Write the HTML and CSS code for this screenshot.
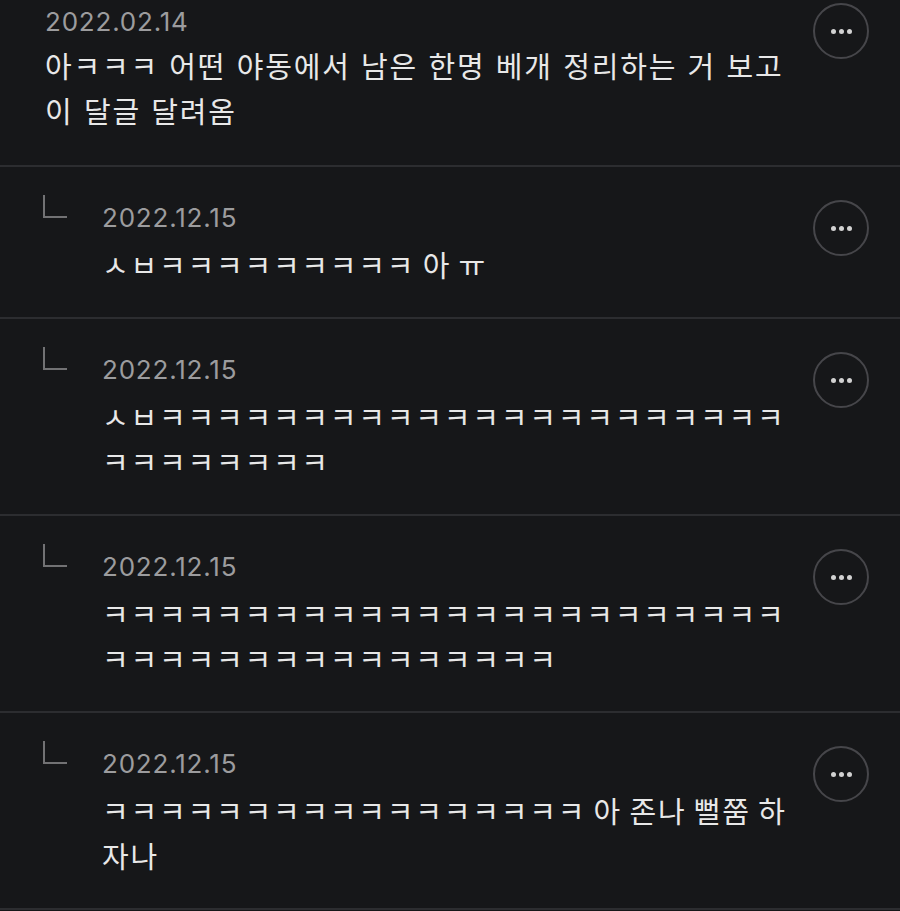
FILE: index.html
```html
<!DOCTYPE html>
<html lang="ko">

<head>
    <meta charset="UTF-8">
    <meta name="viewport" content="width=device-width, initial-scale=1.0">
    <title>댓글</title>
    <link rel="stylesheet" href="styles.css">
</head>

<body>
    <div class="comments">
        <div class="comment comment-top">
            <div class="comment-body">
                <div class="comment-date">2022.02.14</div>
                <p class="comment-text">아ㅋㅋㅋ 어떤 야동에서 남은 한명 베개 정리하는 거 보고 이 달글 달려옴</p>
            </div>
            <button class="more" aria-label="더보기"><span></span><span></span><span></span></button>
        </div>

        <div class="comment reply">
            <span class="reply-mark"></span>
            <div class="comment-body">
                <div class="comment-date">2022.12.15</div>
                <p class="comment-text">ㅅㅂㅋㅋㅋㅋㅋㅋㅋㅋㅋ 아 ㅠ</p>
            </div>
            <button class="more" aria-label="더보기"><span></span><span></span><span></span></button>
        </div>

        <div class="comment reply">
            <span class="reply-mark"></span>
            <div class="comment-body">
                <div class="comment-date">2022.12.15</div>
                <p class="comment-text">ㅅㅂㅋㅋㅋㅋㅋㅋㅋㅋㅋㅋㅋㅋㅋㅋㅋㅋㅋㅋㅋㅋㅋㅋㅋㅋㅋㅋㅋㅋㅋㅋ</p>
            </div>
            <button class="more" aria-label="더보기"><span></span><span></span><span></span></button>
        </div>

        <div class="comment reply">
            <span class="reply-mark"></span>
            <div class="comment-body">
                <div class="comment-date">2022.12.15</div>
                <p class="comment-text">ㅋㅋㅋㅋㅋㅋㅋㅋㅋㅋㅋㅋㅋㅋㅋㅋㅋㅋㅋㅋㅋㅋㅋㅋㅋㅋㅋㅋㅋㅋㅋㅋㅋㅋㅋㅋㅋㅋㅋㅋ</p>
            </div>
            <button class="more" aria-label="더보기"><span></span><span></span><span></span></button>
        </div>

        <div class="comment reply">
            <span class="reply-mark"></span>
            <div class="comment-body">
                <div class="comment-date">2022.12.15</div>
                <p class="comment-text">ㅋㅋㅋㅋㅋㅋㅋㅋㅋㅋㅋㅋㅋㅋㅋㅋㅋ 아 존나 뻘쭘 하자나</p>
            </div>
            <button class="more" aria-label="더보기"><span></span><span></span><span></span></button>
        </div>
    </div>
</body>

</html>
```

FILE: styles.css
```css
body {
    margin: 0;
    padding: 0;
    background: #161719;
    color: #e8e8e8;
    font-family: "Noto Sans CJK KR", "Noto Sans", sans-serif;
}

.comments {
    display: flex;
    flex-direction: column;
}

.comment {
    display: flex;
    align-items: flex-start;
    padding: 28px 31px 30px 45px;
    border-bottom: 2px solid #2c2d30;
}

.comment-top {
    padding-top: 0;
    padding-bottom: 32px;
}

.comment-body {
    flex: 1;
    min-width: 0;
    padding: 7px 2px 0 0;
}

.comment-top .comment-body {
    padding: 6px 10px 0 0;
}

.comment-date {
    font-family: Inter, "Liberation Sans", sans-serif;
    font-size: 26px;
    line-height: 32px;
    letter-spacing: 0.8px;
    color: #9c9c9e;
}

.comment-text {
    margin: 8px 0 0;
    font-size: 29px;
    line-height: 45px;
    letter-spacing: 1.8px;
    word-spacing: -2.5px;
    color: #e8e8e8;
}

.comment-top .comment-text {
    margin-top: 5px;
    word-spacing: 0.5px;
}

/* little corner before each reply */
.reply-mark {
    flex: none;
    width: 57px;
    height: 24px;
    position: relative;
}

.reply-mark::before {
    content: "";
    position: absolute;
    left: -2px;
    top: 0;
    width: 22px;
    height: 21px;
    border-left: 2px solid #727274;
    border-bottom: 2px solid #727274;
}

.more {
    flex: none;
    width: 56px;
    height: 56px;
    margin-top: 5px;
    padding: 0;
    border: 2px solid #46464a;
    border-radius: 50%;
    background: transparent;
    display: flex;
    justify-content: center;
    align-items: center;
    gap: 3px;
    cursor: pointer;
}

.comment-top .more {
    margin-top: 3px;
}

.more span {
    width: 5px;
    height: 5px;
    border-radius: 50%;
    background: #d2d2d2;
}
```
